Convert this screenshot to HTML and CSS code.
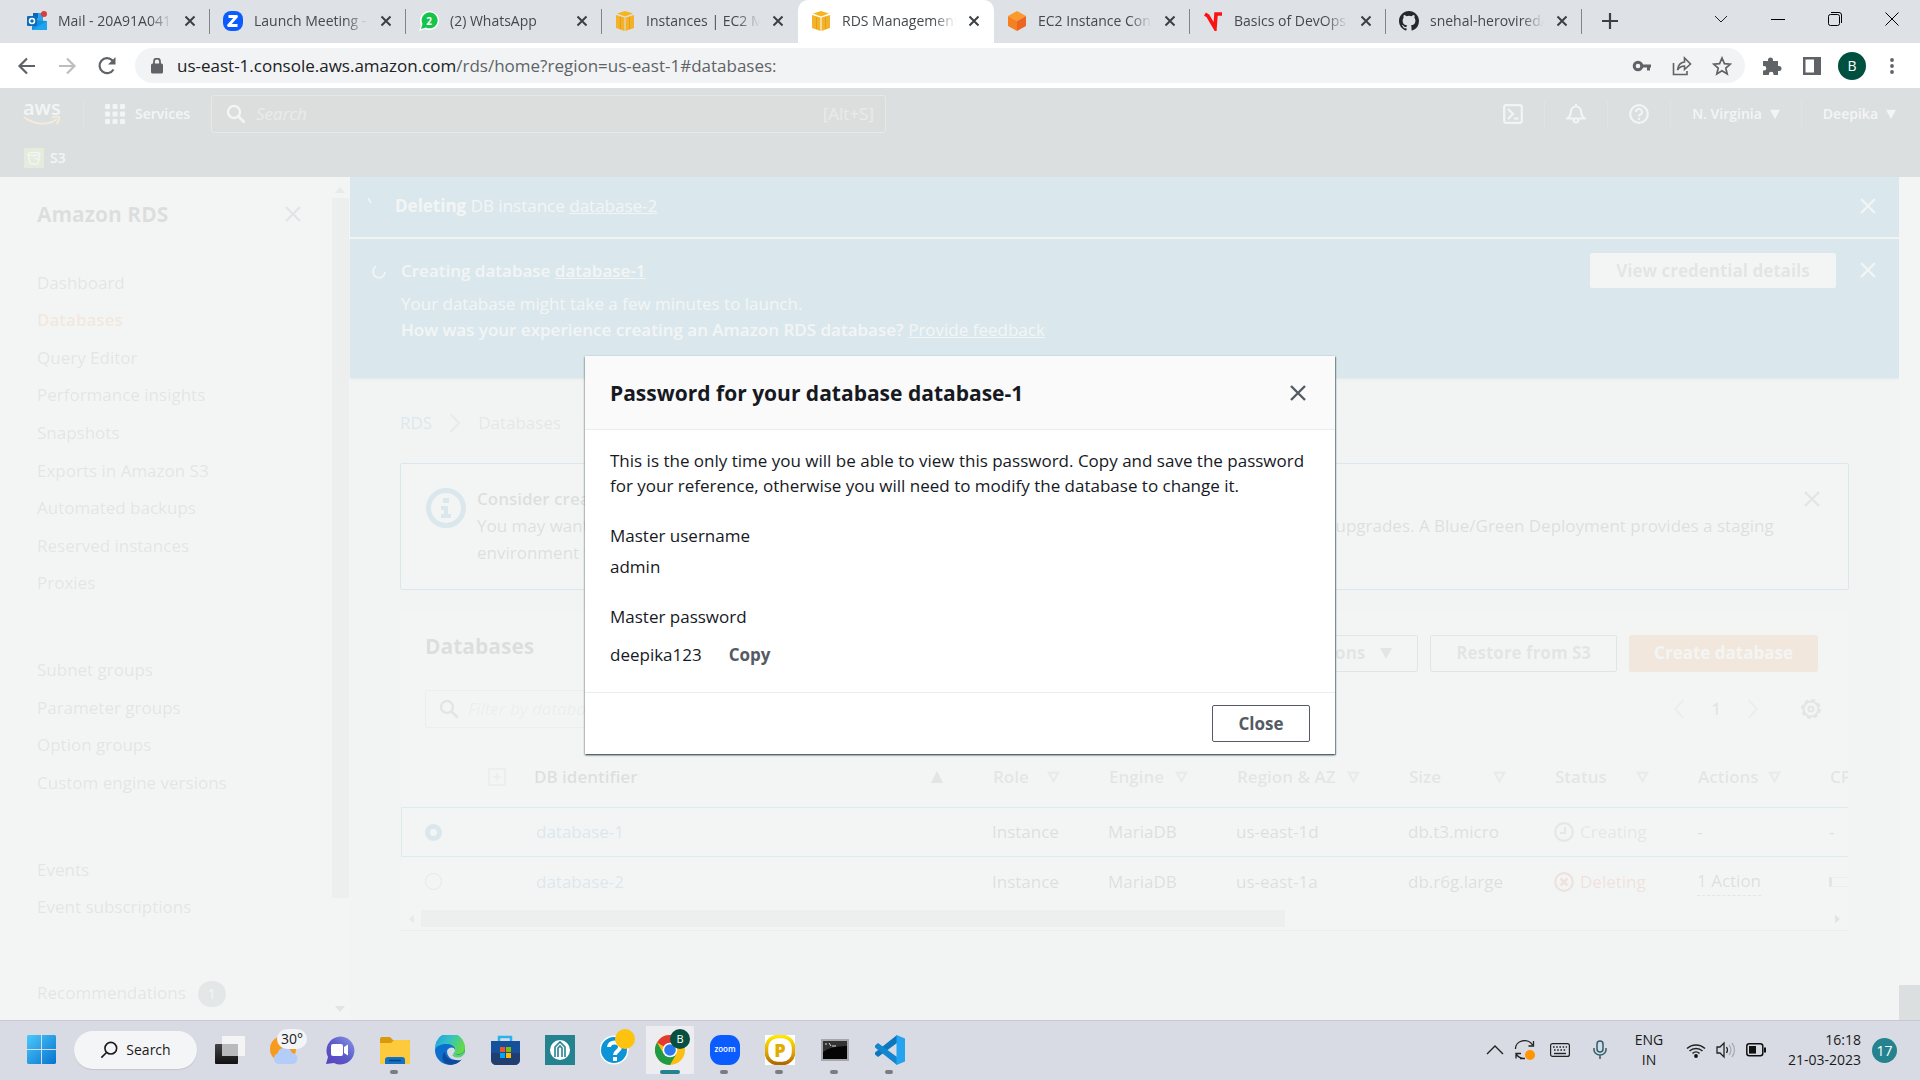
FILE: index.html
```html
<!DOCTYPE html>
<html lang="en">
<head>
<meta charset="utf-8">
<title>RDS Management Console</title>
<link rel="stylesheet" href="styles.css">
</head>
<body>
<svg class="sprite" aria-hidden="true">
  <symbol id="x" viewBox="0 0 20 20"><path d="M3 3l14 14M17 3L3 17" fill="none" stroke="currentColor" stroke-width="2.4"/></symbol>
  <symbol id="tabx" viewBox="0 0 12 12"><path d="M1.5 1.5l9 9M10.5 1.5l-9 9" fill="none" stroke="currentColor" stroke-width="2"/></symbol>
  <symbol id="down" viewBox="0 0 12 12"><path d="M0 1h12L6 12z" fill="currentColor"/></symbol>
  <symbol id="sort" viewBox="0 0 14 12"><path d="M1.8 1.2h10.4L7 10.5z" fill="none" stroke="currentColor" stroke-width="2.400"/></symbol>
  <symbol id="lens" viewBox="0 0 20 20"><circle cx="8" cy="8" r="6" fill="none" stroke="currentColor" stroke-width="2.4"/><path d="M12.5 12.5l6 6" stroke="currentColor" stroke-width="2.6"/></symbol>
  <symbol id="cube" viewBox="0 0 20 20"><path d="M10 0l8 2.500-8 3-8-3z" fill="#f9b41a"/><path d="M1 4l8.500 2.500V20L1 17zM19 4l-8.500 2.500V20L19 17z" fill="#f3b229"/><path d="M5.500 6v12M14.500 6v12" stroke="#e39d17" stroke-width="1"/></symbol>
</svg>

<header class="tabs">
  <div class="tab"><svg class="fav" viewBox="0 0 20 20"><path d="M6 2h10v9H6z" fill="#28a8ea"/><path d="M6 2h5v5H6z" fill="#0a66b8"/><path d="M5 9l15 1v9H5z" fill="#1490df"/><path d="M5 19l15-9v9z" fill="#1fa4ee"/><rect y="5" width="10" height="10" rx="1" fill="#0f6cbd"/><circle cx="5" cy="10" r="2.500" fill="none" stroke="#fff" stroke-width="1.500"/><circle cx="17" cy="3" r="3" fill="#e03b3b"/></svg><span class="name">Mail - 20A91A0417</span><button class="tx" aria-label="Close tab"><svg><use href="#tabx"/></svg></button></div>
  <div class="tab"><svg class="fav" viewBox="0 0 20 20"><rect width="20" height="20" rx="8" fill="#0b5cff"/><path d="M5.500 5.500h8l-8 9h9" fill="none" stroke="#fff" stroke-width="2.800" stroke-linejoin="round"/></svg><span class="name">Launch Meeting - Zoom</span><button class="tx" aria-label="Close tab"><svg><use href="#tabx"/></svg></button></div>
  <div class="tab"><svg class="fav" viewBox="0 0 20 20"><path d="M0 20l2-6a9.500 9.500 0 1 1 4 4z" fill="#fff"/><path d="M2 18l1.500-5a8 8 0 1 1 3.500 3.500z" fill="#17c44b"/><text x="10" y="14" class="wa">2</text></svg><span class="name">(2) WhatsApp</span><button class="tx" aria-label="Close tab"><svg><use href="#tabx"/></svg></button></div>
  <div class="tab plain"><svg class="fav"><use href="#cube"/></svg><span class="name">Instances | EC2 Management</span><button class="tx" aria-label="Close tab"><svg><use href="#tabx"/></svg></button></div>
  <div class="tab active"><svg class="fav"><use href="#cube"/></svg><span class="name">RDS Management Console</span><button class="tx" aria-label="Close tab"><svg><use href="#tabx"/></svg></button></div>
  <div class="tab"><svg class="fav" viewBox="0 0 20 20"><path d="M10 0l9 5-9 5-9-5z" fill="#fb9a2c"/><path d="M1 5l9 5v10l-9-5z" fill="#f58020"/><path d="M19 5l-9 5v10l9-5z" fill="#ec6622"/></svg><span class="name">EC2 Instance Connect</span><button class="tx" aria-label="Close tab"><svg><use href="#tabx"/></svg></button></div>
  <div class="tab"><svg class="fav" viewBox="0 0 20 20"><path d="M2 3l3 2 7 12 1-14h6" fill="none" stroke="#fb1313" stroke-width="3.600"/></svg><span class="name">Basics of DevOps: Git</span><button class="tx" aria-label="Close tab"><svg><use href="#tabx"/></svg></button></div>
  <div class="tab"><svg class="fav" viewBox="0 0 16 16"><path fill="#24292f" d="M8 0C3.580 0 0 3.580 0 8c0 3.540 2.290 6.530 5.470 7.590.4.070.55-.17.55-.38 0-.19-.01-.82-.01-1.490-2.010.37-2.530-.49-2.690-.94-.09-.23-.48-.94-.82-1.130-.28-.15-.68-.52-.01-.53.63-.01 1.080.58 1.230.82.72 1.210 1.870.87 2.330.66.070-.52.280-.87.510-1.070-1.780-.2-3.640-.89-3.640-3.950 0-.87.310-1.590.820-2.150-.08-.2-.36-1.020.08-2.120 0 0 .67-.21 2.200.82a7.600 7.600 0 0 1 4 0c1.530-1.040 2.200-.82 2.200-.82.440 1.100.160 1.920.080 2.120.510.560.820 1.270.820 2.150 0 3.070-1.870 3.750-3.650 3.950.290.250.540.730.540 1.480 0 1.070-.01 1.930-.01 2.200 0 .210.150.460.550.380A8 8 0 0 0 16 8c0-4.420-3.580-8-8-8z"/></svg><span class="name">snehal-herovired/devops</span><button class="tx" aria-label="Close tab"><svg><use href="#tabx"/></svg></button></div>
  <button class="newtab" aria-label="New tab"><svg viewBox="0 0 16 16"><path d="M8 0v16M0 8h16" stroke="#3c4043" stroke-width="2.200"/></svg></button>
  <div class="winctl">
    <button aria-label="Search tabs"><svg viewBox="0 0 14 14"><path d="M1 4l6 6 6-6" fill="none" stroke="#222"/></svg></button>
    <button aria-label="Minimize"><svg viewBox="0 0 14 14"><path d="M0 7.500h14" stroke="#000"/></svg></button>
    <button aria-label="Restore"><svg viewBox="0 0 14 14"><rect x=".5" y="2.500" width="11" height="11" rx="2" fill="none" stroke="#000"/><path d="M3 .5h8a2.500 2.500 0 0 1 2.500 2.500v8" fill="none" stroke="#000"/></svg></button>
    <button aria-label="Close"><svg viewBox="0 0 14 14"><path d="M.5.5l13 13M13.500.5l-13 13" stroke="#000"/></svg></button>
  </div>
</header>

<div class="toolbar">
  <button aria-label="Back"><svg viewBox="0 0 20 20"><path d="M18 10H3M10 2.500L2.500 10l7.500 7.500" fill="none" stroke="#5f6368" stroke-width="2.200"/></svg></button>
  <button aria-label="Forward"><svg viewBox="0 0 20 20"><path d="M2 10h15M10 2.500l7.500 7.500-7.500 7.500" fill="none" stroke="#bcbec0" stroke-width="2.200"/></svg></button>
  <button aria-label="Reload"><svg viewBox="0 0 20 20"><path d="M16.500 13.500a7.500 7.500 0 1 1-1-9L17 6" fill="none" stroke="#5f6368" stroke-width="2.200"/><path d="M18.500 1v7.500H11z" fill="#5f6368"/></svg></button>
  <div class="omnibox">
    <svg class="lock" viewBox="0 0 12 16"><rect y="5.500" width="12" height="10" rx="1.500" fill="#5f6368"/><path d="M3 6V3.500a3 3 0 0 1 6 0V6" fill="none" stroke="#5f6368" stroke-width="1.800"/></svg>
    <span class="url"><b>us-east-1.console.aws.amazon.com</b>/rds/home?region=us-east-1#databases:</span>
    <button aria-label="Passwords"><svg viewBox="0 0 20 20"><circle cx="6" cy="10" r="3.800" fill="none" stroke="#5f6368" stroke-width="3"/><path d="M10 8.500h9v3h-1v3h-3v-3h-5z" fill="#5f6368"/></svg></button>
    <button aria-label="Share"><svg viewBox="0 0 20 20"><path d="M1.500 7v11.500h13.500V15M5.500 14c.5-5 3-7.500 7-8V2l6 6-6 5.500V10c-3 0-5 1-7 4z" fill="none" stroke="#5f6368" stroke-width="1.600"/></svg></button>
    <button aria-label="Bookmark"><svg viewBox="0 0 20 20"><path d="M10 2l2.400 5.600 6 .5-4.600 4 1.400 5.900-5.200-3.200L4.800 18l1.400-5.900-4.600-4 6-.5z" fill="none" stroke="#5f6368" stroke-width="1.700"/></svg></button>
  </div>
  <div class="ext">
    <button aria-label="Extensions"><svg viewBox="0 0 20 20"><path d="M1 5h5V4a2.500 2.500 0 0 1 5 0v1h5v5h1a2.500 2.500 0 0 1 0 5h-1v4h-4.500v-1a2.300 2.300 0 0 0-4.600 0v1H1v-4.500h1a2.300 2.300 0 0 0 0-4.600H1z" fill="#5f6368"/></svg></button>
    <button aria-label="Side panel"><svg viewBox="0 0 20 20"><path d="M1 1h18v18H1zM3.500 3.500v13H12v-13z" fill="#5f6368" fill-rule="evenodd"/></svg></button>
    <button class="avatar">B</button>
    <button aria-label="Menu"><svg viewBox="0 0 20 20"><g fill="#5f6368"><circle cx="10" cy="4" r="1.900"/><circle cx="10" cy="10" r="1.900"/><circle cx="10" cy="16" r="1.900"/></g></svg></button>
  </div>
</div>

<main class="page">
  <div class="aws">
    <div class="awsbar">
      <a class="logo" href="#" aria-label="AWS home"><span>aws</span><svg viewBox="0 0 38 11"><path d="M1 1c10 8 24 9 33 2M29 1.500c3-1 6-1 7-.3.700 1.800-.5 4.500-2.500 6.800" fill="none" stroke="#f90" stroke-width="2"/></svg></a>
      <button class="services"><svg viewBox="0 0 20 20"><g fill="currentColor"><rect width="5" height="5" rx="1"/><rect x="7.500" width="5" height="5" rx="1"/><rect x="15" width="5" height="5" rx="1"/><rect y="7.500" width="5" height="5" rx="1"/><rect x="7.500" y="7.500" width="5" height="5" rx="1"/><rect x="15" y="7.500" width="5" height="5" rx="1"/><rect y="15" width="5" height="5" rx="1"/><rect x="7.500" y="15" width="5" height="5" rx="1"/><rect x="15" y="15" width="5" height="5" rx="1"/></g></svg>Services</button>
      <div class="awssearch"><svg><use href="#lens"/></svg><input type="search" placeholder="Search" aria-label="Search"><span>[Alt+S]</span></div>
      <nav class="awsnav">
        <button aria-label="CloudShell"><svg viewBox="0 0 20 20"><rect x="1.200" y="1.200" width="17.600" height="17.600" rx="2" fill="none" stroke="currentColor" stroke-width="2.200"/><path d="M5 5l5 5-5 5M11 14.500h4.500" fill="none" stroke="currentColor" stroke-width="2"/></svg></button>
        <button aria-label="Notifications"><svg viewBox="0 0 20 20"><path d="M1.500 14.500c3-2 3-4 3.500-7a5 5 0 0 1 10 0c.5 3 .5 5 3.500 7zM10 0v3M7.500 15a2.500 3.500 0 0 0 5 0" fill="none" stroke="currentColor" stroke-width="2.200"/></svg></button>
        <button aria-label="Help"><svg viewBox="0 0 20 20"><circle cx="10" cy="10" r="8.800" fill="none" stroke="currentColor" stroke-width="2.200"/><path d="M7 8a3 3 0 1 1 4.500 2.500Q10 11 10 12.500M10 14v2" fill="none" stroke="currentColor" stroke-width="2"/></svg></button>
        <button>N. Virginia<svg class="tri"><use href="#down"/></svg></button>
        <button>Deepika<svg class="tri"><use href="#down"/></svg></button>
      </nav>
    </div>
    <div class="favs"><a href="#"><svg viewBox="0 0 20 20"><rect width="20" height="20" fill="#7aa116"/><path d="M4 6c0-2 12-2 12 0l-2 9c0 1.500-8 1.500-8 0zM4 6c0 2 12 2 12 0M10 10l6 2" fill="none" stroke="#fff" stroke-width="1.300"/></svg>S3</a></div>
  </div>

  <div class="console">
    <aside class="side">
      <div class="sidehead"><h2>Amazon RDS</h2><button aria-label="Close navigation"><svg><use href="#x"/></svg></button></div>
      <ul class="nine"><li><a href="#">Dashboard</a></li><li><a href="#" class="on">Databases</a></li><li><a href="#">Query Editor</a></li><li><a href="#">Performance insights</a></li><li><a href="#">Snapshots</a></li><li><a href="#">Exports in Amazon S3</a></li><li><a href="#">Automated backups</a></li><li><a href="#">Reserved instances</a></li><li><a href="#">Proxies</a></li></ul>
      <ul class="four"><li><a href="#">Subnet groups</a></li><li><a href="#">Parameter groups</a></li><li><a href="#">Option groups</a></li><li><a href="#">Custom engine versions</a></li></ul>
      <ul class="two"><li><a href="#">Events</a></li><li><a href="#">Event subscriptions</a></li></ul>
      <ul class="one"><li><a href="#">Recommendations</a><span class="count">1</span></li></ul>
    </aside>
    <div class="vscroll"><svg viewBox="0 0 10 6"><path d="M0 6l5-6 5 6z" fill="#8a8a8a"/></svg><i></i><svg viewBox="0 0 10 6"><path d="M0 0l5 6 5-6z" fill="#505050"/></svg></div>

    <section class="content">
      <div class="flash first"><svg class="spin" viewBox="0 0 14 14"><path d="M3 4l3 5" stroke="#fff" stroke-width="1.600"/></svg><p><b>Deleting</b> DB instance <a href="#">database-2</a></p><button class="fx" aria-label="Dismiss"><svg><use href="#x"/></svg></button></div>
      <div class="flash second"><svg class="spin" viewBox="0 0 14 14"><path d="M4 1.500A6 6 0 1 0 13 7" fill="none" stroke="#fff" stroke-width="1.600"/></svg>
        <div class="msg"><h3>Creating database <a href="#">database-1</a></h3><p><span class="semi">Your database might take a few minutes to launch.</span><br><b>How was your experience creating an Amazon RDS database?</b> <a href="#">Provide feedback</a></p></div>
        <button class="cred">View credential details</button><button class="fx" aria-label="Dismiss"><svg><use href="#x"/></svg></button></div>

      <div class="inner">
        <nav class="crumbs"><a href="#">RDS</a><svg viewBox="0 0 12 20"><path d="M1.500 1l8.500 9-8.500 9" fill="none" stroke="#879596" stroke-width="2.200"/></svg><span>Databases</span></nav>

        <div class="info">
          <svg class="i" viewBox="0 0 40 40"><circle cx="20" cy="20" r="17.500" fill="none" stroke="#0073bb" stroke-width="5"/><path d="M17 10h6v5h-6zM15 18h7v8h3v4H15v-4h3v-4h-3z" fill="#0073bb"/></svg>
          <div class="infotext"><b>Consider creating a Blue/Green Deployment to minimize downtime during upgrades</b><p>You may want to consider using Amazon RDS Blue/Green Deployments and minimize your downtime during upgrades. A Blue/Green Deployment provides a staging environment for changes to production databases.</p></div>
          <button aria-label="Dismiss"><svg><use href="#x"/></svg></button>
        </div>

        <div class="card">
          <div class="cardhead"><h2>Databases</h2><div class="actions"><button>Modify</button><button class="drop">Actions<svg><use href="#down"/></svg></button><button>Restore from S3</button><button class="primary">Create database</button></div></div>
          <div class="filter"><div class="fbox"><svg><use href="#lens"/></svg><input type="search" placeholder="Filter by databases" aria-label="Filter by databases"></div>
            <div class="pager"><button aria-label="Previous"><svg viewBox="0 0 12 20"><path d="M10.500 1L2 10l8.500 9" fill="none" stroke="#aab7b8" stroke-width="2"/></svg></button><b>1</b><button aria-label="Next"><svg viewBox="0 0 12 20"><path d="M1.500 1L10 10l-8.500 9" fill="none" stroke="#aab7b8" stroke-width="2"/></svg></button><button class="gear" aria-label="Preferences"><svg viewBox="0 0 20 20"><circle cx="10" cy="10" r="7.500" fill="none" stroke="currentColor" stroke-width="2.200"/><circle cx="10" cy="10" r="9" fill="none" stroke="currentColor" stroke-width="2" stroke-dasharray="4 3.070"/><circle cx="10" cy="10" r="2.600" fill="none" stroke="currentColor" stroke-width="2"/></svg></button></div></div>
          <div class="tablebox">
            <table>
              <colgroup><col class="c0"><col class="c1"><col class="c2"><col class="c3"><col class="c4"><col class="c5"><col class="c6"><col class="c7"><col class="c8"></colgroup>
              <thead><tr><th><span></span></th><th class="sorted"><span><svg class="plus" viewBox="0 0 18 18"><path d="M1 1h16v16H1zM9 5v8M5 9h8" fill="none" stroke="#aab7b8" stroke-width="2"/></svg>DB identifier<svg><path d="M0 12h12L6 0z" fill="currentColor"/></svg></span></th><th><span>Role<svg><use href="#sort"/></svg></span></th><th><span>Engine<svg><use href="#sort"/></svg></span></th><th><span>Region &amp; AZ<svg><use href="#sort"/></svg></span></th><th><span>Size<svg><use href="#sort"/></svg></span></th><th><span>Status<svg><use href="#sort"/></svg></span></th><th><span>Actions<svg><use href="#sort"/></svg></span></th><th><span>CPU</span></th></tr></thead>
              <tbody>
                <tr class="sel"><td><input type="radio" name="db" aria-label="database-1" checked></td><td class="id"><a href="#">database-1</a></td><td>Instance</td><td>MariaDB</td><td>us-east-1d</td><td>db.t3.micro</td><td><span class="st"><svg viewBox="0 0 20 20"><circle cx="10" cy="10" r="8.800" fill="none" stroke="currentColor" stroke-width="2.200"/><path d="M11 5v6H6" fill="none" stroke="currentColor" stroke-width="2"/></svg>Creating</span></td><td>-</td><td>-</td></tr>
                <tr><td><input type="radio" name="db" aria-label="database-2"></td><td class="id"><a href="#">database-2</a></td><td>Instance</td><td>MariaDB</td><td>us-east-1a</td><td>db.r6g.large</td><td><span class="st bad"><svg viewBox="0 0 20 20"><circle cx="10" cy="10" r="8.800" fill="none" stroke="currentColor" stroke-width="2.200"/><path d="M6.500 6.500l7 7M13.500 6.500l-7 7" fill="none" stroke="currentColor" stroke-width="2.600"/></svg>Deleting</span></td><td><span class="act">1 Action</span></td><td><span class="meter"></span></td></tr>
              </tbody>
            </table>
          </div>
          <div class="hscroll"><svg viewBox="0 0 6 10"><path d="M6 0L0 5l6 5z" fill="#8a8a8a"/></svg><i></i><svg viewBox="0 0 6 10"><path d="M0 0l6 5-6 5z" fill="#505050"/></svg></div>
        </div>
      </div>
    </section>
    <div class="pagescroll"></div>
  </div>

  <div class="overlay">
    <div class="modal" role="dialog" aria-labelledby="mt">
      <div class="mhead"><h2 id="mt">Password for your database database-1</h2><button aria-label="Close dialog"><svg><use href="#x"/></svg></button></div>
      <div class="mbody">
        <p>This is the only time you will be able to view this password. Copy and save the password for your reference, otherwise you will need to modify the database to change it.</p>
        <dl><dt>Master username</dt><dd>admin</dd><dt>Master password</dt><dd class="pw">deepika123<button>Copy</button></dd></dl>
      </div>
      <div class="mfoot"><button>Close</button></div>
    </div>
  </div>
</main>

<footer class="taskbar">
  <button class="start" aria-label="Start"><svg viewBox="0 0 30 30"><defs><linearGradient id="w" x1="0" y1="0" x2="1" y2="1"><stop offset="0" stop-color="#4cc8fa"/><stop offset="1" stop-color="#0673d0"/></linearGradient></defs><path d="M1 0h13v14H0V1zM15 0h13l1 1v13H15zM0 15h14v14H1l-1-1zM15 15h14v13l-1 1H15z" fill="url(#w)"/></svg></button>
  <button class="tsearch"><svg viewBox="0 0 20 20"><circle cx="12" cy="8" r="6.500" fill="none" stroke="#1a1a1a" stroke-width="1.800"/><path d="M7.500 12.500L1.500 18.500" stroke="#1a1a1a" stroke-width="1.800"/></svg>Search</button>
  <div class="apps">
    <button aria-label="Task view"><svg viewBox="0 0 30 30"><defs><linearGradient id="k" x1="0" y1="0" x2="0" y2="1"><stop offset="0" stop-color="#444"/><stop offset="1" stop-color="#111"/></linearGradient></defs><rect y="9" width="23" height="20" rx="1" fill="url(#k)"/><rect x="7" y="1" width="23" height="20" rx="1" fill="#f4f4f5"/><rect x="7" y="9" width="16" height="12" fill="#b9babb"/></svg></button>
    <button class="weather" aria-label="Weather"><svg viewBox="0 0 30 30"><circle cx="13" cy="14" r="13" fill="#f79b1c"/><path d="M8 29a5.500 5.500 0 0 1-.5-10.500A7.500 7.500 0 0 1 22 18a5.500 5.500 0 0 1 0 11z" fill="#b3cdf8"/></svg><span class="deg">30°</span></button>
    <button aria-label="Chat"><svg viewBox="0 0 30 30"><defs><linearGradient id="c" x1="0" y1="1" x2="1" y2="0"><stop offset="0" stop-color="#5a3fbd"/><stop offset=".5" stop-color="#5b5bc9"/><stop offset="1" stop-color="#8b9ae6"/></linearGradient></defs><path d="M1 29l2-7a14 14 0 1 1 6 6z" fill="url(#c)"/><rect x="6" y="9" width="12" height="12" rx="2" fill="#fff"/><path d="M19 12l4-2.500v11L19 18z" fill="#fff"/></svg></button>
    <button class="run" aria-label="File Explorer"><svg viewBox="0 0 30 30"><path d="M0 4q0-2 2-2h8l3 3h15q2 0 2 2v5H0z" fill="#d9990b"/><path d="M0 8h11l3-3h14q2 0 2 2v21q0 1-1 1H1q-1 0-1-1z" fill="#fdca3d"/><path d="M5 29v-4q0-3 3-3h14q3 0 3 3v4z" fill="#1272c6"/><path d="M9 25.500h12" stroke="#0b3f7d" stroke-width="1.500"/></svg></button>
    <button aria-label="Edge"><svg viewBox="0 0 30 30"><defs><linearGradient id="e" x1="0" y1="0" x2="1" y2=".4"><stop offset="0" stop-color="#1b9de2"/><stop offset=".5" stop-color="#33c0c9"/><stop offset="1" stop-color="#62d84d"/></linearGradient></defs><circle cx="15" cy="15" r="15" fill="#0c6fce"/><path d="M0 14A15 15 0 0 1 30 12c.5 6-5 8.500-10 7-2-.8-1-2 0-4 .5-3-3-6-8-6-6 0-10 2-12 5z" fill="url(#e)"/><path d="M10 17c0 6 6 10 17 7-5 7-14 7-18 3-3-4-1-9 1-10z" fill="#0f4a9b"/><path d="M12 16c1-4 7-5 8-1 .3 2-2 3-1 4 4 2 9 1 11-2 0 4-2 7-4 8-8 1-14-2-14-9z" fill="#d8dbe5"/><path d="M19 19c4 2 9 1 11-4 0 9-10 9-13 5z" fill="#5bd36a"/></svg></button>
    <button aria-label="Store"><svg viewBox="0 0 30 30"><path d="M9 8V2h12v6" fill="none" stroke="#27b4ee" stroke-width="2.500"/><path d="M1 6h29v18q0 6-6 6H7q-6 0-6-6z" fill="#14509b"/><path d="M1 18h29v6q0 6-6 6H7q-6 0-6-6z" fill="#203e70"/><path d="M10 12h5v5h-5z" fill="#f35325"/><path d="M16 12h5v5h-5z" fill="#81bc06"/><path d="M10 18h5v5h-5z" fill="#05a6f0"/><path d="M16 18h5v5h-5z" fill="#ffba08"/></svg></button>
    <button aria-label="Security"><svg viewBox="0 0 30 30"><path d="M0 0h30v30H0z" fill="#258390"/><circle cx="15" cy="15" r="10" fill="#fff"/><path d="M10 22V12l5-5 5 5v10M13 22v-9l2-2 2 2v9" fill="none" stroke="#258390" stroke-width="1.600"/></svg></button>
    <button aria-label="Help"><svg viewBox="0 0 30 30"><circle cx="14" cy="15" r="14.500" fill="#fff"/><circle cx="14" cy="15" r="13" fill="#0b95d8"/><path d="M9 12c0-6 11-6 11 0 0 4-5 4-5 8M15 22v4" fill="none" stroke="#fff" stroke-width="4"/></svg><span class="dot"></span></button>
    <button class="run cur" aria-label="Chrome"><svg viewBox="0 0 30 30"><circle cx="15" cy="15" r="15" fill="#fbbf12"/><path d="M15 15L2 7.500A15 15 0 0 1 28 7.500H15z" fill="#e33b2e"/><path d="M2 7.500A15 15 0 0 0 15 30l6.500-11.500H8.500z" fill="#219a45"/><circle cx="15" cy="15" r="7.300" fill="#fff"/><circle cx="15" cy="15" r="5.800" fill="#2b78f0"/></svg><span class="badge">B</span></button>
    <button class="run" aria-label="Zoom"><svg viewBox="0 0 30 30"><rect width="30" height="30" rx="11" fill="#0b5cff"/><text x="15" y="17" class="zt">zoom</text></svg></button>
    <button class="run" aria-label="P app"><svg viewBox="0 0 30 30"><defs><linearGradient id="p" x1="0" y1="0" x2="0" y2="1"><stop offset="0" stop-color="#ffe600"/><stop offset=".6" stop-color="#e0a500"/><stop offset="1" stop-color="#b06a00"/></linearGradient></defs><path d="M0 0h30v30H0z" fill="#fff"/><rect x="1.500" y="1.500" width="27" height="27" rx="11" fill="#fff" stroke="url(#p)" stroke-width="3.500"/><text x="15" y="21.500" class="pt">P</text></svg></button>
    <button class="run" aria-label="Terminal"><svg viewBox="0 0 30 30"><path d="M1 4h28v22H1z" fill="#a6a8ab"/><path d="M3 6h24v18H3z" fill="#050505"/><path d="M3 6h24v5Q10 11 3 17z" fill="#333"/><path d="M5 9h2M9 8l2 3M12 11h4" stroke="#ddd"/></svg></button>
    <button class="run" aria-label="VS Code"><svg viewBox="0 0 30 30"><path d="M22 8L3 22l-3-2.500v-2L22 0z" fill="#0b77bd"/><path d="M22 22L3 8 0 10.500v2L22 30z" fill="#1386ce"/><path d="M21.500 0L30 3.500v23L21.500 30z" fill="#24a3f0"/></svg></button>
  </div>
  <div class="tray">
    <svg class="chev" viewBox="0 0 18 18"><path d="M1 13l8-8 8 8" fill="none" stroke="#222" stroke-width="1.400"/></svg>
    <svg class="sync" viewBox="0 0 22 20"><path d="M1.500 9a9 8 0 0 1 17-4M19.500 1v5h-5M6 18.500h5M2 18.500v-5h5M2 14q3 4 7 4.500" fill="none" stroke="#222" stroke-width="1.300"/><circle cx="16" cy="15" r="5" fill="#ff9500"/></svg>
    <svg class="kb" viewBox="0 0 20 14"><rect x=".6" y=".6" width="18.800" height="12.800" rx="2" fill="none" stroke="#222" stroke-width="1.200"/><path d="M3 4h14M4 7h12" stroke="#222" stroke-width="1.600" stroke-dasharray="1.600 1.600"/><path d="M4 10.500h12" stroke="#222" stroke-width="1.400"/></svg>
    <svg class="mic" viewBox="0 0 14 20"><rect x="4" y="1" width="6" height="11" rx="3" fill="none" stroke="#2b5f6c" stroke-width="1.500"/><path d="M1 8v2a6 5 0 0 0 12 0V8M7 15v4" fill="none" stroke="#2b5f6c" stroke-width="1.500"/></svg>
    <span class="lang">ENG<br>IN</span>
    <svg class="wifi" viewBox="0 0 20 16"><path d="M1 6.500a13 13 0 0 1 18 0M3.500 9a9.500 9.500 0 0 1 13 0M6.500 11.500a5 5 0 0 1 7 0" fill="none" stroke="#222" stroke-width="1.500"/><circle cx="10" cy="14" r="1.900" fill="#111"/></svg>
    <svg class="vol" viewBox="0 0 20 16"><path d="M1 5h3l4-4v14l-4-4H1z" fill="none" stroke="#222" stroke-width="1.300"/><path d="M10.500 5q2 3 0 6" fill="none" stroke="#222" stroke-width="1.300"/><path d="M13 3q4 5 0 10M16 1q5 7 0 14" fill="none" stroke="#a9acb3" stroke-width="1.300"/></svg>
    <svg class="bat" viewBox="0 0 20 14"><rect x=".8" y=".8" width="16" height="12" rx="2.500" fill="none" stroke="#111" stroke-width="1.500"/><rect x="3" y="3" width="7" height="7.600" fill="#111"/><path d="M18 4.500h2v5h-2z" fill="#111"/></svg>
    <span class="clock">16:18<br>21-03-2023</span>
    <span class="num">17</span>
  </div>
</footer>
</body>
</html>
```
FILE: styles.css
```css
* { box-sizing: border-box; }
body { margin: 0; height: 100vh; display: flex; flex-direction: column; overflow: hidden; font: 17px/24px "Open Sans", "Noto Sans", sans-serif; color: #16191f; }
button { border: 0; padding: 0; background: none; font: inherit; color: inherit; display: flex; align-items: center; justify-content: center; flex: none; }
input { font: inherit; }
svg { display: block; width: 20px; height: 20px; flex: none; }
ul, dl, dd, p, h2, h3 { margin: 0; padding: 0; list-style: none; }
a { color: inherit; }
b, h3 { font-weight: 600; }
h2 { font-size: 21px; line-height: 28px; font-weight: 700; }
h3 { font-size: 17px; }
.sprite { position: absolute; width: 0; height: 0; }

/* Browser tabs */
.tabs { display: flex; flex: none; height: 43px; background: #dee1e6; padding-left: 14px; font-size: 14px; color: #45494d; }
.tab { display: flex; align-items: center; flex: 0 1 196px; min-width: 0; padding: 0 14px 2px 13px; position: relative; }
.tab::after { content: ""; position: absolute; right: 0; top: 9px; width: 1px; height: 25px; background: #80868b; }
.tab.plain::after, .tab.active::after { display: none; }
.tab.active { background: #fff; border-radius: 10px 10px 0 0; }
.fav { margin-right: 11px; }
.name { flex: 1; min-width: 0; overflow: hidden; white-space: nowrap; -webkit-mask-image: linear-gradient(90deg, #000 80%, transparent); mask-image: linear-gradient(90deg, #000 80%, transparent); }
.tx { margin-left: 12px; color: #3c4043; }
.tx svg { width: 12px; height: 12px; }
.wa { font: bold 10px "Open Sans", sans-serif; fill: #fff; text-anchor: middle; }
.newtab { width: 56px; padding-bottom: 2px; }
.newtab svg { width: 16px; height: 16px; }
.winctl { display: flex; margin-left: auto; height: 37px; }
.winctl button { width: 57px; }
.winctl svg { width: 14px; height: 14px; }

/* Address bar */
.toolbar { display: flex; align-items: center; flex: none; height: 45px; padding: 0 8px 0 7px; background: #fff; }
.toolbar > button { width: 40px; }
.omnibox { flex: 1; display: flex; align-items: center; height: 35px; margin-left: 8px; padding: 0 3px 0 16px; border-radius: 18px; background: #f1f3f4; }
.omnibox button { width: 40px; }
.lock { width: 12px; height: 16px; margin-right: 14px; }
.url { flex: 1; color: #5f6368; font-size: 17px; }
.url b { font-weight: 400; color: #202124; }
.ext { display: flex; align-items: center; margin-left: 7px; }
.ext button { width: 40px; }
.ext .avatar { width: 28px; height: 28px; margin: 0 6px; border-radius: 50%; background: #00503f; color: #fff; font-size: 14px; }

/* AWS header */
.page { flex: 1; min-height: 0; display: flex; flex-direction: column; position: relative; background: #f2f3f3; }
.aws { flex: none; height: 89px; background: #161e2d; color: #fff; font-size: 14px; font-weight: 600; }
.awsbar { display: flex; align-items: center; height: 52px; }
.logo { width: 84px; height: 28px; padding-left: 23px; border-right: 1px solid #414750; text-decoration: none; font: 600 20px/16px "Open Sans", sans-serif; }
.logo svg { width: 38px; height: 11px; }
.services { width: 127px; gap: 10px; }
.awssearch { display: flex; align-items: center; width: 675px; height: 38px; padding: 0 11px 0 14px; border: 1px solid #7b8794; border-radius: 3px; background: #1c1c24; }
.awssearch input { flex: 1; min-width: 0; margin-left: 8px; border: 0; background: none; font-size: 17px; font-weight: 400; font-style: italic; }
.awssearch input::placeholder { color: #8d99a5; opacity: 1; }
.awssearch span { color: #8d99a5; font-size: 17px; font-weight: 400; }
.awsnav { display: flex; margin-left: auto; padding-right: 8px; }
.awsnav button { height: 28px; padding: 0 21px; border-left: 1px solid #414750; gap: 8px; }
.awsnav button:first-child { border: 0; }
.awsnav button:last-child { padding-right: 16px; }
.awsnav .tri { width: 10px; height: 10px; }
.favs a { display: inline-flex; align-items: center; gap: 6px; height: 36px; padding-left: 24px; text-decoration: none; }

/* Side navigation */
.console { flex: 1; min-height: 0; display: flex; }
.side { width: 331px; flex: none; background: #fff; overflow: hidden; color: #545b64; }
.sidehead { display: flex; align-items: center; justify-content: space-between; height: 75px; padding: 0 28px 0 37px; border-bottom: 1px solid #eaeded; }
.sidehead h2 { color: #16191f; }
.side ul { display: grid; grid-auto-rows: 1fr; margin: 0 27px; padding: 24px 0 24px 10px; border-bottom: 1px solid #eaeded; box-sizing: content-box; align-items: center; }
.side ul a { text-decoration: none; }
.side .nine { height: 338px; padding-top: 12px; }
.side .four { height: 151px; }
.side .two { height: 75px; }
.side .one { height: 38px; padding-top: 24px; border: 0; }
.side .on { color: #ec7211; font-weight: 600; }
.side .count { display: inline-block; margin-left: 12px; width: 28px; line-height: 26px; border-radius: 13px; background: #687078; color: #fff; text-align: center; font-size: 14px; }
.vscroll { flex: none; width: 19px; display: flex; flex-direction: column; align-items: center; background: #fafafa; padding: 10px 1px 8px 0; }
.vscroll svg { width: 10px; height: 6px; }
.vscroll i { width: 17px; height: 700px; margin: 5px 0 auto; background: #c1c1c1; }
.pagescroll { flex: none; width: 21px; background: linear-gradient(#151f2d, #151f2d) bottom / 21px 35px no-repeat #fff; }

/* Flash messages */
.content { flex: 1; min-width: 0; background: #f2f3f3; }
.flash { display: flex; background: #0073bb; color: #fff; }
.flash + .flash { margin-top: 2px; box-shadow: 0 1px 2px #687078; }
.spin { width: 14px; height: 14px; }
.first { height: 60px; padding: 17px 21px 0 15px; }
.first p { flex: 1; margin-left: 16px; }
.first b { font-weight: 700; }
.second { height: 139px; padding: 14px 21px 0 22px; }
.second .spin { margin-top: 12px; }
.msg { flex: 1; margin: 6px 0 0 15px; }
.msg p { margin-top: 8px; line-height: 26px; }
.semi { font-weight: 500; }
.cred { width: 246px; height: 35px; border-radius: 2px; background: #fff; color: #545b64; font-weight: 700; }
.fx { width: 20px; height: 20px; }
.first .fx { margin-top: 2px; }
.second .fx { margin: 7px 0 0 22px; }
.inner { padding: 30px 50px 0 50px; }
.crumbs { display: flex; align-items: center; height: 30px; margin-bottom: 25px; gap: 17px; color: #687078; }
.crumbs a { color: #0073bb; text-decoration: none; }
.crumbs svg { width: 12px; height: 22px; }
.info { display: flex; height: 127px; padding: 21px 26px 0 25px; border: 1px solid #0073bb; border-radius: 2px; background: #f1faff; }
.i { width: 40px; height: 40px; margin-top: 3px; }
.infotext { flex: 1; margin: 0 26px 0 11px; line-height: 27px; }
.info button { width: 20px; height: 20px; margin-top: 4px; color: #545b64; }

/* Databases table */
.card { margin-top: 21px; background: #fff; border: 1px solid #eaeded; border-top: 0; border-bottom-color: #aab7b8; }
.cardhead { display: flex; justify-content: space-between; align-items: center; height: 84px; padding: 0 30px 0 24px; }
.cardhead h2 { margin-bottom: 14px; }
.actions { display: flex; gap: 12px; }
.actions button { height: 37px; padding: 0 25px; border: 1px solid #545b64; border-radius: 2px; color: #545b64; font-weight: 700; }
.actions .primary { padding: 0 24px; background: #ec7211; border-color: #ec7211; color: #fff; }
.drop svg { width: 12px; height: 12px; margin-left: 15px; }
.filter { display: flex; justify-content: space-between; height: 51px; padding: 0 27px 0 24px; }
.fbox { display: flex; align-items: center; width: 600px; height: 38px; margin-top: -5px; padding: 0 13px; border: 1px solid #aab7b8; border-radius: 2px; color: #545b64; }
.fbox input { flex: 1; margin-left: 7px; border: 0; font-style: italic; }
.fbox input::placeholder { color: #aab7b8; opacity: 1; }
.pager { display: flex; align-items: center; height: 38px; margin-top: -5px; gap: 26px; color: #545b64; }
.pager svg { width: 12px; }
.pager .gear { height: 38px; padding-left: 21px; border-left: 1px solid #eaeded; margin-left: -6px; }
.gear svg { width: 20px; }
.tablebox { overflow: hidden; border-top: 1px solid #eaeded; }
table { width: 1700px; table-layout: fixed; border-collapse: separate; border-spacing: 0; }
.c0 { width: 65px; } .c1 { width: 500px; } .c2 { width: 116px; } .c3 { width: 128px; } .c4 { width: 172px; } .c5 { width: 146px; } .c6 { width: 143px; } .c7 { width: 132px; }
th { height: 60px; padding: 0; text-align: left; color: #545b64; font-weight: 600; }
th span { display: flex; align-items: center; justify-content: space-between; height: 30px; padding: 0 21px 0 27px; border-right: 1px solid #eaeded; white-space: nowrap; }
th svg { width: 13px; height: 12px; color: #879596; }
th.sorted { color: #16191f; }
th.sorted svg { color: #545b64; }
th .plus { width: 18px; height: 18px; }
th.sorted > span { justify-content: flex-start; padding-left: 22px; }
th.sorted .plus { margin-right: 28px; }
th.sorted svg:last-child { margin-left: auto; }
td { height: 50px; padding: 0 0 0 26px; white-space: nowrap; border-bottom: 1px solid #eaeded; }
td:first-child { padding-left: 24px; }
.id { padding-left: 70px; }
.id a { color: #0073bb; text-decoration: none; }
.sel td { background: #f1faff; border-top: 1px solid #00a1c9; border-bottom: 1px solid #00a1c9; }
.sel td:first-child { border-left: 1px solid #00a1c9; padding-left: 23px; }
td input { appearance: none; display: block; width: 17px; height: 17px; margin: 0; border: 1px solid #687078; border-radius: 50%; background: #fff; }
td input:checked { border: 5px solid #0073bb; }
.st { display: flex; align-items: center; gap: 6px; color: #687078; }
.bad { color: #d13212; }
.act { display: inline-block; line-height: 28px; border-bottom: 1px dashed #545b64; }
.meter { display: block; height: 10px; border: 1px solid #aab7b8; border-left: 3px solid #545b64; }
.hscroll { display: flex; align-items: center; height: 23px; padding: 0 8px; background: #fafafa; }
.hscroll i { width: 864px; height: 17px; margin: 0 auto 0 7px; background: #c1c1c1; }
.hscroll svg { width: 5px; height: 10px; }

/* Password dialog */
.overlay { position: absolute; inset: 0; display: flex; align-items: center; justify-content: center; background: rgba(242, 244, 243, .9); }
.modal { width: 750px; max-width: 100%; background: #fff; box-shadow: 0 1px 2px #33474f, 1px 1px 1px #9fb0b4; margin-top: 2px; }
.mhead { display: flex; align-items: center; justify-content: space-between; height: 74px; padding: 0 27px 0 25px; background: #fafafa; border-bottom: 1px solid #eaeded; color: #545b64; }
.mhead h2 { color: #16191f; }
.mbody { padding: 18px 25px 20px; }
.mbody p, .mbody dt, .mbody dd { line-height: 25px; }
.mbody dt { margin-top: 25px; }
.mbody dd { margin-top: 6px; }
.mbody .pw { display: flex; gap: 27px; align-items: center; margin-top: 13px; }
.pw button { color: #545b64; font-weight: 700; }
.mfoot { display: flex; justify-content: flex-end; padding: 12px 25px; border-top: 1px solid #eaeded; margin-top: 5px; }
.mfoot button { width: 98px; height: 37px; border: 1px solid #545b64; border-radius: 2px; color: #545b64; font-weight: 700; }

/* Taskbar */
.taskbar { flex: none; display: flex; align-items: center; height: 60px; padding: 0 23px 1px 27px; background: #d8dbe4; border-top: 1px solid #c7cad6; font-size: 14px; color: #1a1a1a; }
.start svg { width: 30px; height: 30px; }
.tsearch { width: 123px; height: 38px; margin: 0 5px 0 17px; gap: 8px; border-radius: 19px; background: #f4f5f7; box-shadow: 0 1px 1px #c2c5cc; }
.tsearch svg { width: 18px; height: 18px; }
.apps { display: flex; }
.apps button { width: 55px; height: 48px; position: relative; border-radius: 5px; }
.apps svg { width: 30px; height: 30px; }
.run::after { content: ""; position: absolute; left: 23px; bottom: 0; width: 8px; height: 4px; border-radius: 2px; background: #7b7c80; }
.cur { background: linear-gradient(#ececf1, #ececf1) center / 48px 48px no-repeat; }
.apps .cur::after { left: 18px; width: 20px; background: #258390; }
.deg { position: absolute; left: 20px; top: 3px; width: 30px; line-height: 20px; border-radius: 10px; background: #f3f4f7; }
.dot { position: absolute; left: 28px; top: 3px; width: 20px; height: 20px; border-radius: 50%; background: #ffc20e; }
.badge { position: absolute; left: 28px; top: 3px; width: 20px; line-height: 20px; border-radius: 50%; background: #07503f; color: #fff; font-size: 11px; }
.zt { font: 600 8px "Open Sans", sans-serif; fill: #fff; text-anchor: middle; }
.pt { font: 800 18px "Open Sans", sans-serif; fill: #e0ad00; text-anchor: middle; }
.tray { display: flex; align-items: center; margin-left: auto; }
.chev { width: 18px; height: 18px; }
.sync { width: 22px; margin: 0 14px 0 10px; }
.mic { width: 14px; margin: 0 27px 0 23px; }
.lang { width: 30px; text-align: center; line-height: 20px; }
.wifi { margin: 0 10px 0 22px; }
.vol { margin-right: 10px; }
.clock { width: 95px; text-align: right; line-height: 20px; }
.num { width: 25px; margin-left: 11px; line-height: 25px; border-radius: 50%; background: #258390; color: #fff; text-align: center; }
```
